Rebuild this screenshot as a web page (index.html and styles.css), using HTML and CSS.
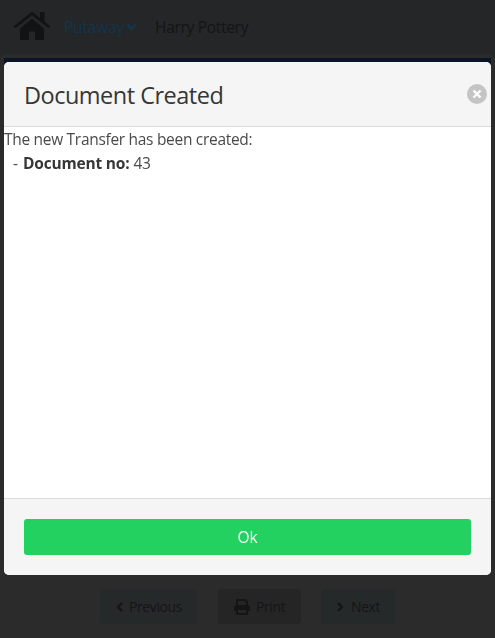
FILE: index.html
```html
<!DOCTYPE html>
<html lang="en">
<head>
<meta charset="utf-8">
<title>Putaway</title>
<link rel="stylesheet" href="styles.css">
</head>
<body>
<div class="page">
  <header class="navbar">
    <svg class="home" viewBox="0 0 36 28"><path d="M6 16.500 18 6.500 30 16.500V26.500q0 1.500-1.500 1.500H21V19.500H15V28H7.500q-1.500 0-1.500-1.500Z"/><path class="roof" d="M1.500 14.500 18 1.500 34.500 14.500"/><path d="M26 0h4.500v11L26 7.500Z"/></svg>
    <a class="nav-link"><span class="nav-label">Putaway</span><svg class="caret" viewBox="0 0 11 8"><path d="M1.200 1.500l4.300 4.300 4.300-4.300"/></svg></a>
    <span class="user">Harry Pottery</span>
  </header>
  <main class="panel">
    <div class="band"></div>
    <div class="actions">
      <button class="btn info prev"><svg class="arrow" viewBox="0 0 7 10"><path d="M6 1 2 5l4 4"/></svg><span>Previous</span></button>
      <button class="btn print"><svg class="printer" viewBox="0 0 16 16"><path d="M3 7V1h8l2 2v4M3 11H1V9q0-2 2-2h10q2 0 2 2v2h-2M3 10h10v5H3z"/><path class="tray" d="M1 7h14v3H1z"/></svg><span>Print</span></button>
      <button class="btn info next"><svg class="arrow" viewBox="0 0 7 10"><path d="M1 1l4 4-4 4"/></svg><span>Next</span></button>
    </div>
  </main>
</div>
<div class="modal">
  <section class="card">
    <header class="card-head">
      <h1 class="title">Document Created</h1>
      <button class="close" aria-label="close"><svg viewBox="0 0 20 20"><path d="M6.500 6.500l7 7M13.500 6.500l-7 7"/></svg></button>
    </header>
    <div class="card-body">
      <p class="message">The new Transfer has been created:</p>
      <p class="item">- <strong>Document no:</strong> <span>43</span></p>
    </div>
    <footer class="card-foot"><button class="ok">Ok</button></footer>
  </section>
</div>
</body>
</html>
```
FILE: styles.css
```css
* { box-sizing: border-box; }
body, h1, p { margin: 0; }
body {
  height: 638px;
  overflow: hidden;
  background: #242628;
  color: #151515;
  font: 15.500px/24px "Open Sans", "Noto Sans", sans-serif;
}
button { border: 0; padding: 0; font: inherit; color: inherit; }
svg { display: block; flex: none; fill: none; stroke: currentColor; }
.page { display: flex; flex-direction: column; height: 638px; }
.navbar { display: flex; align-items: center; height: 54px; padding-left: 14px; }
.home { width: 36px; height: 28px; margin-top: -2px; fill: #131313; stroke: none; }
.roof { fill: none; stroke: #131313; stroke-width: 2.8; stroke-linecap: round; }
.nav-link { display: flex; align-items: center; margin-left: 14px; color: #12354a; }
.nav-label { width: 60px; letter-spacing: -0.2px; white-space: nowrap; }
.caret { width: 11px; height: 8px; margin: -1px 0 0 2px; stroke-width: 2.7; }
.user { margin-left: 18px; letter-spacing: -0.3px; }
.panel { display: flex; flex-direction: column; flex: 1; padding: 4px 4px 0; border-radius: 6px 6px 0 0; background: #2b2b2b; }
.band { height: 8px; background: #0c1528; }
.actions { display: flex; justify-content: center; gap: 20px; margin-top: 523px; font-size: 14px; }
.btn { display: flex; align-items: center; height: 35px; border-radius: 4px; background: #252525; letter-spacing: -0.4px; white-space: nowrap; }
.info { background: #25292a; }
.prev { width: 98px; padding-left: 16px; gap: 6px; }
.print { width: 83px; padding-left: 16px; gap: 6px; }
.next { width: 74px; padding-left: 16px; gap: 7px; }
.arrow { width: 7px; height: 10px; stroke-width: 2.2; }
.printer { width: 16px; height: 16px; stroke-width: 2; }
.tray { fill: currentColor; stroke: none; }
.modal { position: fixed; inset: 0; display: flex; padding: 62px 4px 63px; }
.card { display: flex; flex: 1; flex-direction: column; overflow: hidden; border-radius: 5px; background: #fff; color: #4a4a4a; }
.card-head { display: flex; align-items: center; justify-content: space-between; height: 65px; padding: 0 4px 0 20px; border-bottom: 1px solid #dbdbdb; background: #f5f5f5; }
.title { color: #363636; font-size: 23.500px; line-height: 24px; font-weight: 400; letter-spacing: -0.5px; margin-top: 2px; }
.close { width: 20px; height: 20px; border-radius: 50%; background: #c4c4c4; color: #fff; }
.close svg { stroke-width: 2.4; }
.card-body { flex: 1; }
.message { letter-spacing: -0.3px; white-space: nowrap; }
.item { padding-left: 9px; }
.item strong { margin-left: 1px; color: #363636; letter-spacing: -0.2px; }
.item span { letter-spacing: -0.2px; }
.card-foot { height: 77px; padding: 20px; border-top: 1px solid #dbdbdb; background: #f5f5f5; }
.ok { width: 100%; height: 36px; border-radius: 3px; background: #23d160; color: #fff; }
```
